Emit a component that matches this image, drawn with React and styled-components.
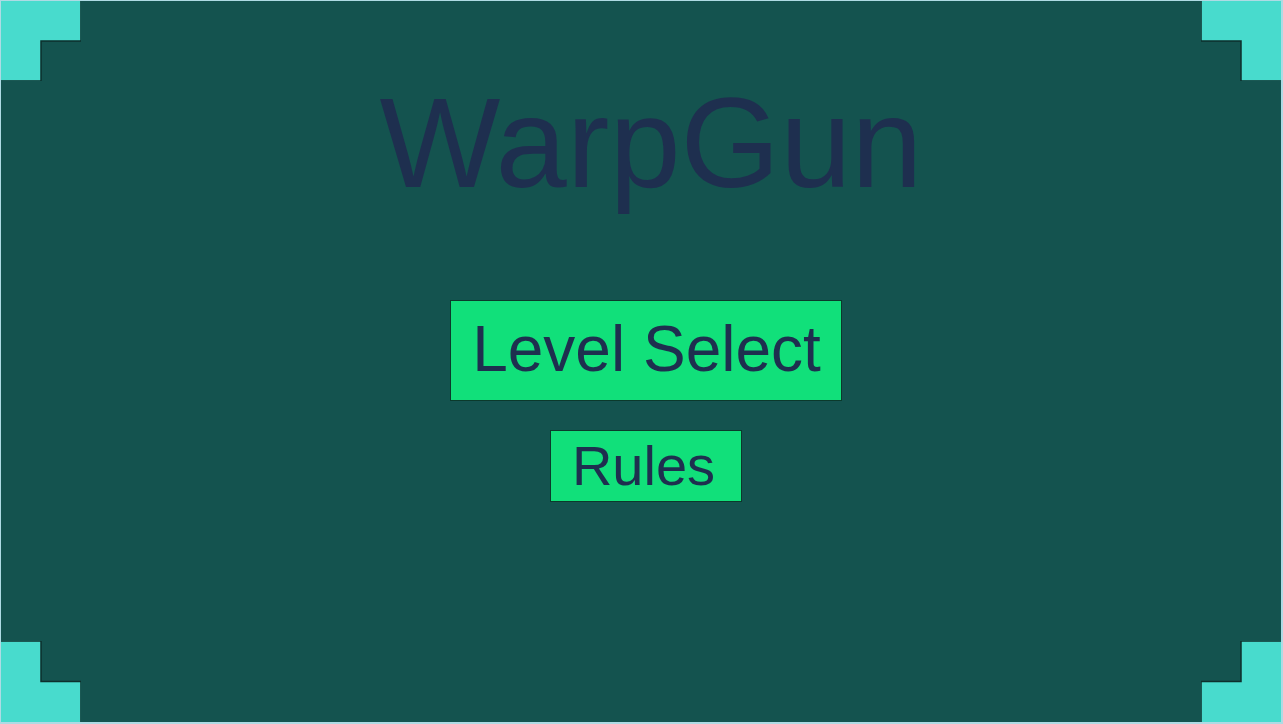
import React from 'react';
import styled, { createGlobalStyle } from 'styled-components';

const GlobalStyle = createGlobalStyle`
  html, body {
    margin: 0;
    padding: 0;
    background: #aedbe4;
    font-family: "Liberation Sans", Arial, sans-serif;
  }
`;

const Frame = styled.div`
  position: relative;
  box-sizing: border-box;
  width: 1280px;
  height: 721px;
  margin: 1px 0 0 1px;
  padding-left: 10px;
  background: #14534f;
  display: flex;
  flex-direction: column;
  align-items: center;
  overflow: hidden;
`;

const Title = styled.h1`
  margin: 68px 0 84px 10px;
  font-size: 128px;
  font-weight: normal;
  line-height: 1.15;
  color: #1e2f4f;
`;

const Menu = styled.div`
  display: flex;
  flex-direction: column;
  align-items: center;
  gap: 29px;
`;

const MenuButton = styled.button`
  box-sizing: border-box;
  margin: 0;
  padding: ${p => p.$pad};
  font-family: "Liberation Sans", Arial, sans-serif;
  font-size: ${p => p.$size}px;
  line-height: 1.15;
  color: #1e2f4f;
  background: #11e07a;
  border: 1px solid #0b3a2c;
  border-radius: 0;
  cursor: pointer;
`;

const CornerBox = styled.svg`
  position: absolute;
  width: 80px;
  height: ${p => (p.$top ? 80 : 81)}px;
  ${p => (p.$top ? 'top: 0;' : 'bottom: 0;')}
  ${p => (p.$left ? 'left: 0;' : 'right: 0;')}
  transform: scale(${p => (p.$left ? 1 : -1)}, ${p => (p.$top ? 1 : -1)});
`;

const Corner = ({ top, left }) => (
  <CornerBox $top={top} $left={left} viewBox="0 0 80 80" preserveAspectRatio="none">
    <path d="M-2 -2 H80 V40 H40 V80 H-2 Z" fill="#48dbcd" stroke="#0d2f2c" strokeWidth="1.5" />
  </CornerBox>
);

const App = () => (
  <>
    <GlobalStyle />
    <Frame>
      <Corner top left />
      <Corner top />
      <Corner left />
      <Corner />
      <Title>WarpGun</Title>
      <Menu>
        <MenuButton $size={64} $pad="12px 20px 13px 21px">Level Select</MenuButton>
        <MenuButton $size={56} $pad="3px 26px 3px 21px">Rules</MenuButton>
      </Menu>
    </Frame>
  </>
);

export default App;
